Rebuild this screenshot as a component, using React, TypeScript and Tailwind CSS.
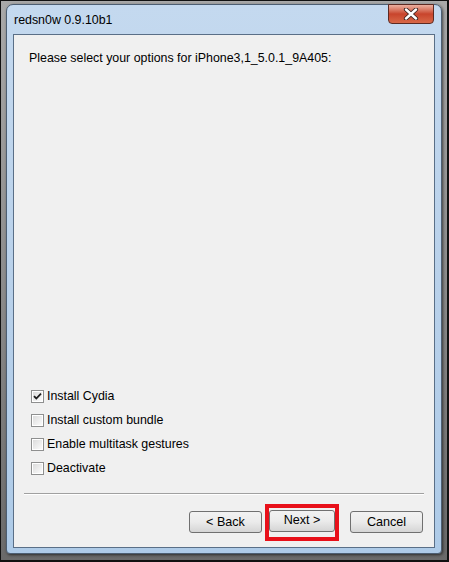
import React from 'react';

const options = [
    { label: 'Install Cydia', checked: true },
    { label: 'Install custom bundle', checked: false },
    { label: 'Enable multitask gestures', checked: false },
    { label: 'Deactivate', checked: false },
];

function CheckBox({ checked }: { checked: boolean }) {
    return (
        <div className="w-[13px] h-[13px] border border-[#8e8f8f] bg-white p-px shrink-0">
            <div className="w-full h-full bg-gradient-to-br from-[#dcdcdc] to-[#fbfbfb] flex items-center justify-center">
                {checked && (
                    <svg width="9" height="9" viewBox="0 0 9 9">
                        <path d="M1 4.2 L3.3 6.5 L8 1.6" stroke="#1c1c1c" strokeWidth="1.8" fill="none" />
                    </svg>
                )}
            </div>
        </div>
    );
}

function WinButton({ children, full }: { children: React.ReactNode; full?: boolean }) {
    return (
        <div className={`${full ? 'w-full' : 'w-[73px]'} h-[22px] rounded-[3px] border border-[#707070] bg-gradient-to-b from-[#f2f2f2] via-[#ebebeb] to-[#d5d5d5] flex items-center justify-center text-[12.6px] text-black`}>
            {children}
        </div>
    );
}

export default function App() {
    return (
        <div className="w-[449px] h-[562px] bg-[#111] pl-px pt-px pr-[2px] pb-[2px] overflow-hidden" style={{ fontFamily: '"Liberation Sans", Arial, sans-serif' }}>
            <div className="w-full h-full bg-gradient-to-b from-[#a9a9a9] via-[#8c8c8c] to-[#6a6a6a] pl-[5px] pt-[3px] pr-[5px] pb-[6px]">
                {/* window frame */}
                <div className="relative w-full h-full rounded-t-[7px] rounded-b-[4px] border border-[#4d5f73] bg-gradient-to-b from-[#c4d9ef] via-[#b9d1ea] to-[#aecbe8] px-[6px] pb-[5px] flex flex-col shadow-[1px_1px_3px_rgba(0,0,0,0.6)]">
                    <div className="h-[29px] flex items-center pl-[1px] pt-[1px] text-[12.4px] text-black">
                        redsn0w 0.9.10b1
                    </div>
                    {/* close button */}
                    <div className="absolute top-[-1px] right-[7px] w-[46px] h-[20px] rounded-b-[4px] border border-[#5c2a22] bg-gradient-to-b from-[#eab0a0] via-[#c8442c] to-[#d86848] flex items-center justify-center">
                        <svg width="16" height="12" viewBox="0 0 16 12">
                            <path d="M3 1.5 L13 10.5 M13 1.5 L3 10.5" stroke="#3a2420" strokeWidth="4.2" strokeLinecap="round" />
                            <path d="M3 1.5 L13 10.5 M13 1.5 L3 10.5" stroke="#ffffff" strokeWidth="2.4" strokeLinecap="round" />
                        </svg>
                    </div>
                    {/* client area */}
                    <div className="flex-1 border border-[#5a6f87] bg-[#f0f0f0] flex flex-col">
                        <div className="pl-[15px] pt-[14px] text-[12.4px] text-black">
                            Please select your options for iPhone3,1_5.0.1_9A405:
                        </div>
                        <div className="flex-1" />
                        <div className="pl-[17px] flex flex-col gap-[11px]">
                            {options.map(o => (
                                <div key={o.label} className="flex items-center gap-[3px] h-[13px] text-[12.4px] text-black">
                                    <CheckBox checked={o.checked} />
                                    <span>{o.label}</span>
                                </div>
                            ))}
                        </div>
                        <div className="mt-[18px] mx-[10px] h-[2px] border-t border-[#a0a0a0] border-b-white border-b" />
                        <div className="h-[52px] flex items-center justify-end pr-[11px] pt-[2px]">
                            <WinButton>&lt; Back</WinButton>
                            <div className="ml-[3px] w-[74px] h-[37px] border-[4px] border-[#e8101a] pt-[2px]">
                                <WinButton full>Next &gt;</WinButton>
                            </div>
                            <div className="ml-[11px]">
                                <WinButton>Cancel</WinButton>
                            </div>
                        </div>
                    </div>
                </div>
            </div>
        </div>
    );
}
